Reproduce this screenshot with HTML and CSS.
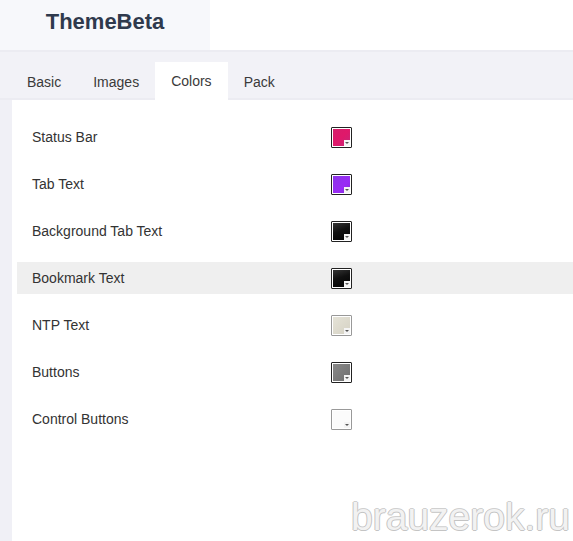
FILE: index.html
```html
<!DOCTYPE html>
<html>
<head>
<meta charset="utf-8">
<link rel="stylesheet" href="styles.css">
</head>
<body>
<div class="page">
  <header class="header">
    <div class="brand">ThemeBeta</div>
  </header>
  <nav class="tabbar">
    <div class="tab">Basic</div>
    <div class="tab">Images</div>
    <div class="tab active">Colors</div>
    <div class="tab">Pack</div>
  </nav>
  <main class="main">
    <div class="strip"></div>
    <div class="content">
      <div class="row"><span class="label">Status Bar</span><span class="swatch sw-status"><i class="corner"></i></span></div>
      <div class="row"><span class="label">Tab Text</span><span class="swatch sw-tab"><i class="corner"></i></span></div>
      <div class="row"><span class="label">Background Tab Text</span><span class="swatch sw-black"><i class="corner"></i></span></div>
      <div class="row hl"><span class="label">Bookmark Text</span><span class="swatch sw-black"><i class="corner"></i></span></div>
      <div class="row"><span class="label">NTP Text</span><span class="swatch sw-ntp light"><i class="corner"></i></span></div>
      <div class="row"><span class="label">Buttons</span><span class="swatch sw-gray"><i class="corner"></i></span></div>
      <div class="row"><span class="label">Control Buttons</span><span class="swatch sw-white light"><i class="corner"></i></span></div>
    </div>
  </main>
  <div class="watermark">brauzerok.ru</div>
</div>
</body>
</html>
```

FILE: styles.css
```css
html, body {
  margin: 0;
  padding: 0;
  background: #ffffff;
}
body {
  font-family: "Liberation Sans", Arial, sans-serif;
  color: #333;
}
.page {
  position: relative;
  width: 573px;
  height: 541px;
  overflow: hidden;
  display: flex;
  flex-direction: column;
}
.header {
  height: 50px;
  display: flex;
  background: #fff;
}
.brand {
  width: 210px;
  background: #f7f8fb;
  display: flex;
  align-items: center;
  justify-content: center;
  font-size: 22px;
  font-weight: bold;
  color: #2f3a4d;
  padding-bottom: 6px;
  box-sizing: border-box;
}
.tabbar {
  height: 50px;
  box-sizing: border-box;
  background: #f2f2f7;
  border-top: 2px solid #ececf2;
  border-bottom: 2px solid #ececf2;
  display: flex;
  align-items: flex-end;
  padding-left: 11px;
}
.tab {
  height: 36px;
  padding: 0 16px;
  display: flex;
  align-items: center;
  font-size: 14px;
  color: #3a3a3a;
  margin-bottom: -2px;
}
.tab.active {
  background: #ffffff;
  height: 38px;
}
.main {
  flex: 1;
  display: flex;
}
.strip {
  width: 12px;
  background: #f0f0f6;
}
.content {
  flex: 1;
  background: #fff;
  padding-top: 21px;
  display: flex;
  flex-direction: column;
  gap: 15px;
}
.row {
  margin-left: 5px;
  height: 32px;
  display: grid;
  grid-template-columns: 314px 21px;
  align-items: center;
}
.row.hl {
  background: #efefef;
}
.label {
  padding-left: 15px;
  font-size: 14px;
  color: #333;
}
.swatch {
  position: relative;
  width: 21px;
  height: 21px;
  box-sizing: border-box;
  border: 1px solid #222;
  box-shadow: inset 0 0 0 1px #fff;
  border-radius: 1px;
}
.swatch.light {
  border-color: #999;
}
.corner {
  position: absolute;
  right: 1px;
  bottom: 1px;
  width: 6px;
  height: 6px;
  background: #f4f4f4;
}
.corner::after {
  content: "";
  position: absolute;
  left: 1px;
  top: 2px;
  border-left: 2px solid transparent;
  border-right: 2px solid transparent;
  border-top: 2px solid #555;
}
.sw-status { background: linear-gradient(135deg, #d4206c 0%, #e0186a 50%, #c12a7a 100%); }
.sw-tab { background: linear-gradient(135deg, #8a35e8 0%, #9a2cf5 60%, #7b2bd0 100%); }
.sw-black { background: linear-gradient(160deg, #3a3a3a 0%, #111 45%, #000 100%); }
.sw-ntp { background: linear-gradient(135deg, #e6e4d8 0%, #d4d1c3 100%); }
.sw-gray { background: linear-gradient(135deg, #8a8a8a 0%, #6e6e6e 100%); }
.sw-white { background: #fbfbfb; }
.watermark {
  position: absolute;
  right: 3px;
  bottom: 1px;
  font-size: 39px;
  line-height: 46px;
  color: #f2f2f2;
  text-shadow: 1px 0 0 #c4c4c4, -1px 0 0 #c4c4c4, 0 1px 0 #c4c4c4, 0 -1px 0 #d0d0d0;
}
```
